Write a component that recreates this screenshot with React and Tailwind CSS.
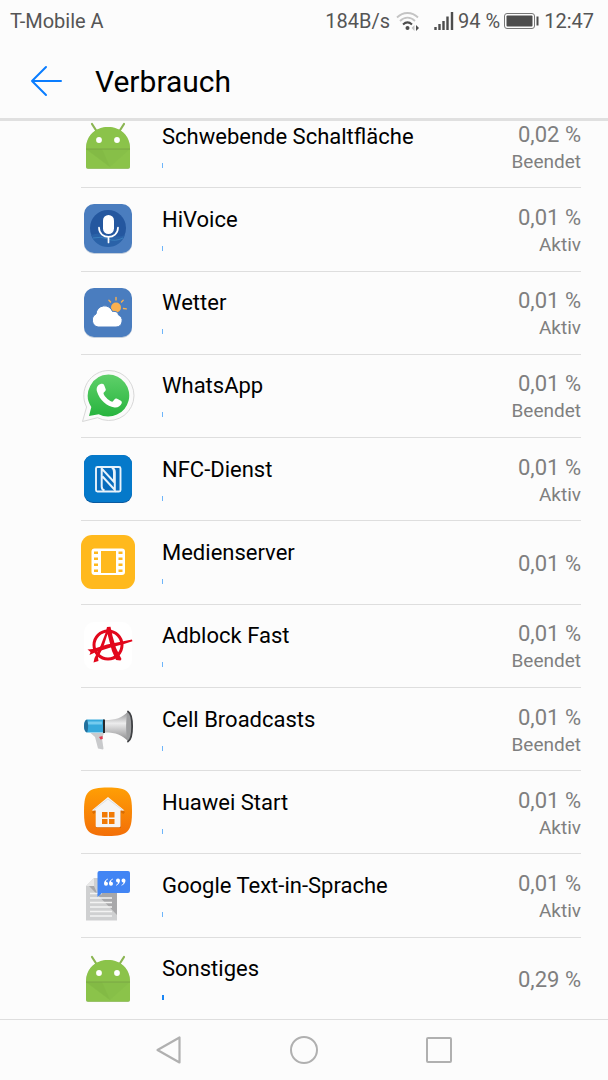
function AndroidIcon() {
  return (
    <>
      <path d="M11 5l4.500 7M43 5l-4.500 7" stroke="#8bb552" strokeWidth="2.200" strokeLinecap="round" />
      <path d="M5 30C5 16 15 8.500 27 8.500S49 16 49 30v18a2 2 0 0 1-2 2H7a2 2 0 0 1-2-2z" fill="#6d9c3a" opacity=".6" />
      <path d="M5 30C5 16 15 8 27 8s22 8 22 22v17.500a2 2 0 0 1-2 2H7a2 2 0 0 1-2-2z" fill="#8bc34a" />
      <path d="M5 30h44L29 48z" fill="#7cb342" opacity=".25" />
      <path d="M5 30h16L29 48z" fill="#7cb342" opacity=".4" />
      <path d="M5 30h44" stroke="#7aa644" strokeWidth="1" />
      <circle cx="18" cy="21" r="2.900" fill="#fff" />
      <circle cx="36" cy="21" r="2.900" fill="#fff" />
    </>
  );
}

function VoiceIcon() {
  return (
    <>
      <rect x="3" y="4" width="48" height="48" rx="10" fill="#9fb0c8" opacity=".6" />
      <rect x="3" y="2" width="48" height="49" rx="10" fill="#4a7dbf" />
      <circle cx="27" cy="26" r="18" fill="#24579f" />
      <path d="M10 33q8-3 17 0t17 0A18 18 0 0 1 10 33z" fill="#2a62a8" />
      <path d="M12 36q8-2 15 1t15-1" stroke="#3b80bd" strokeWidth="1" />
      <rect x="22" y="13" width="11" height="19" rx="5.500" fill="#fff" />
      <path d="M18 25.500c0 12.500 19 12.500 19 0M27.500 35v5.500" stroke="#fff" strokeWidth="1.700" strokeLinecap="round" />
    </>
  );
}

function WeatherIcon() {
  return (
    <>
      <rect x="3" y="4" width="48" height="48" rx="10" fill="#9fb0c8" opacity=".6" />
      <rect x="3" y="2" width="48" height="49" rx="10" fill="#4a7dbf" />
      <circle cx="35" cy="21.500" r="5" fill="#f9b04f" />
      <path
        d="M35 14v-2.500M29.500 16l-1.600-1.800M40.500 16l1.700-1.800M42.500 22.500l2.800.4"
        stroke="#f9b04f"
        strokeWidth="1.400"
        strokeLinecap="round"
      />
      <path
        d="M17 41a7 7 0 0 1-2-13 8.500 8.500 0 0 1 16.500-2.500c4-.5 5.500 1 6 3.500A6.300 6.300 0 0 1 35 41z"
        fill="#fff"
        stroke="#4a7dbf"
        strokeWidth="1"
      />
    </>
  );
}

function WhatsAppIcon() {
  return (
    <>
      <path
        d="M28 1.500a25 25 0 1 1-11.500 47.200L1.500 52.500 5.600 38A25 25 0 0 1 28 1.500z"
        fill="#fafafa"
        stroke="#d8d8d8"
        strokeWidth="1"
      />
      <path d="M27.500 5.500a21 21 0 1 1-9.800 39.700L8 47l2.300-9A21 21 0 0 1 27.500 5.500z" fill="url(#waGreen)" />
      <path
        d="M19.500 15c-3 1-4.500 4-3.500 7.500C18.500 31 26 37.500 33.500 38.500c3.500.4 6-1.500 7.200-4.200.6-1.700-.3-2.400-5.200-4.700-1.500-.7-2.200 1.600-3.800 3-1.200.8-8.500-4.600-9.200-8.200-.2-1 2.500-2.200 2.300-3.800-.2-1-1.500-4-2-5-.5-.9-1.800-1-3.300-.6z"
        fill="#fff"
      />
      <defs>
        <linearGradient id="waGreen" x1="0" y1="0" x2="0" y2="1">
          <stop offset="0" stopColor="#5fd06a" />
          <stop offset="1" stopColor="#27b43e" />
        </linearGradient>
      </defs>
    </>
  );
}

function NfcIcon() {
  return (
    <>
      <rect x="3" y="3" width="48" height="48" rx="9" fill="#0a5aa0" />
      <rect x="3" y="3" width="48" height="47" rx="9" fill="#0579ca" />
      <rect x="15" y="15" width="24.500" height="24.500" rx="1.500" fill="#0a6cbc" stroke="#e9f3fb" strokeWidth="1.900" />
      <path
        d="M23.500 38.500c-1.800-.6-2.800-2-2.800-4V16.500L33 30V20c0-2-.5-3.500-2-4.500M31 16c1.800.6 2.800 2 2.800 4v18L21.500 24.500"
        stroke="#e9f3fb"
        strokeWidth="2"
      />
    </>
  );
}

function MediaIcon() {
  return (
    <>
      <rect width="54" height="54" rx="11" fill="#ffb91d" />
      <rect x="10.500" y="13.500" width="33.500" height="26.500" rx="3" fill="#fff" />
      <path d="M20 16h15v22H20z" fill="#ffb91d" />
      <path
        d="M13 16.500h4V19h-4zM13 22.500h4V25h-4zM13 28.500h4V31h-4zM13 34.500h4V37h-4zM37.500 16.500h4V19h-4zM37.500 22.500h4V25h-4zM37.500 28.500h4V31h-4zM37.500 34.500h4V37h-4z"
        fill="#ffb91d"
      />
    </>
  );
}

function AdblockIcon() {
  return (
    <>
      <rect x="3" y="3" width="48" height="48" rx="10" fill="#fff" />
      <circle cx="27" cy="26" r="14" stroke="#e2071c" strokeWidth="3" />
      <path
        d="M26 8l3.500-.3 2 9.300 3.500 12 5.500 11-1 1.500-4.500-.5-4-9-4.500-17-4 12.500-5.500 11 .5 3.500-5 1.500 1-4.500 6-12 5-13z"
        fill="#e2071c"
      />
      <path d="M6.500 30.500l5.500-.5 14-4.500 25-5 .4 1.800L43 25l-15 4-14 4.500-5.500 2.500 1-3z" fill="#e2071c" />
    </>
  );
}

function MegaphoneIcon() {
  return (
    <>
      <path d="M9.500 31l4.500 4 3 11.500 5 1 .5-1-1.500-10 2-5.500z" fill="#c9cacc" />
      <path d="M18 35l3.500-1 .3 3-2.300.5z" fill="#e23b50" />
      <path d="M6 17.500h17v13H6c-4-1-4-12 0-13z" fill="#36a9dc" />
      <path d="M6 19.500h15v3H5z" fill="#74cbef" />
      <path d="M6 17.500c-4 1-4 12 0 13 1.500-3 1.500-10 0-13z" fill="#236f9b" />
      <path d="M22 17.500h2v13.500h-2z" fill="#26292d" />
      <path d="M24 18c11 0 17-2 23-8.500v29.500C41 33 35 30.500 24 30.500z" fill="url(#horn)" />
      <path d="M47 9.500c5.500 3 5.500 27 0 30-2.500-5-2.500-25 0-30z" fill="#9d9ea0" />
      <path d="M47 9.500c5.500 3 5.500 27 0 30" stroke="#3f4144" strokeWidth="1.800" strokeLinecap="round" />
      <defs>
        <linearGradient id="horn" x1="0" y1="0" x2="0" y2="1">
          <stop offset="0" stopColor="#8d8d8f" />
          <stop offset=".4" stopColor="#ececed" />
          <stop offset="1" stopColor="#8a8a8c" />
        </linearGradient>
      </defs>
    </>
  );
}

function HomeIcon() {
  return (
    <>
      <path
        d="M27 2.500c20 0 24 4 24 24s-4 24.500-24 24.500S3 46.500 3 26.500s4-24 24-24z"
        fill="url(#homeOrange)"
      />
      <path d="M27 13l17 14-1.500 2-2.500-1.500V43H15V27.500L12.500 29 11 27z" fill="#c55c00" opacity=".6" />
      <path d="M27 12l16.500 13.500h-4V41a1.300 1.300 0 0 1-1.300 1.300H16a1.300 1.300 0 0 1-1.300-1.300V25.500h-4z" fill="#f5f5f5" />
      <path d="M12 25.500L27 14l15 11.500" stroke="#d9d9d9" strokeWidth=".8" />
      <path d="M21 27h5.500v5.500H21zM28 27h5.500v5.500H28zM21 34h5.500v5H21zM28 34h5.500v5H28z" fill="#f17a05" />
      <defs>
        <linearGradient id="homeOrange" x1="0" y1="0" x2="0" y2="1">
          <stop offset="0" stopColor="#ff9f05" />
          <stop offset="1" stopColor="#f36f08" />
        </linearGradient>
      </defs>
    </>
  );
}

function SpeechIcon() {
  return (
    <>
      <path d="M5 17l8-8h23v42.500H5z" fill="#cfd0d1" />
      <path d="M5 17l8-8v8z" fill="#e8e8e8" />
      <path d="M5 17h3l28 29V24H16l-3-7z" fill="#9b9b9c" opacity=".75" />
      <path d="M9 24.500h12M9 29h22M9 33.500h22M9 38h22M9 42.500h22M9 47h22" stroke="#f3f3f3" strokeWidth="1.500" />
      <path d="M18.500 2H47a2 2 0 0 1 2 2v18a2 2 0 0 1-2 2H21l-4.500 4V4a2 2 0 0 1 2-2z" fill="#4285f4" />
      <path
        d="M27 9.500c-2.500 1-4 3-4 5.200a2 2 0 1 0 2-2c0-1 .8-1.900 2-2.400zM32 9.500c-2.500 1-4 3-4 5.200a2 2 0 1 0 2-2c0-1 .8-1.900 2-2.400zM35 16.800c2.500-1 4-3 4-5.200a2 2 0 1 0-2 2c0 1-.8 1.900-2 2.400zM40.500 16.800c2.500-1 4-3 4-5.200a2 2 0 1 0-2 2c0 1-.8 1.900-2 2.400z"
        fill="#fff"
      />
    </>
  );
}

const apps = [
  { name: "Schwebende Schaltfläche", value: "0,02 %", status: "Beendet", Icon: AndroidIcon },
  { name: "HiVoice", value: "0,01 %", status: "Aktiv", Icon: VoiceIcon },
  { name: "Wetter", value: "0,01 %", status: "Aktiv", Icon: WeatherIcon },
  { name: "WhatsApp", value: "0,01 %", status: "Beendet", Icon: WhatsAppIcon },
  { name: "NFC-Dienst", value: "0,01 %", status: "Aktiv", Icon: NfcIcon },
  { name: "Medienserver", value: "0,01 %", Icon: MediaIcon },
  { name: "Adblock Fast", value: "0,01 %", status: "Beendet", Icon: AdblockIcon },
  { name: "Cell Broadcasts", value: "0,01 %", status: "Beendet", Icon: MegaphoneIcon },
  { name: "Huawei Start", value: "0,01 %", status: "Aktiv", Icon: HomeIcon },
  { name: "Google Text-in-Sprache", value: "0,01 %", status: "Aktiv", Icon: SpeechIcon },
  { name: "Sonstiges", value: "0,29 %", Icon: AndroidIcon },
];

function StatusBar() {
  return (
    <div className="flex h-[42px] items-center justify-between pr-3.5 pl-2.5 text-xl text-[#555]">
      <span>T-Mobile A</span>
      <div className="flex items-center">
        <span>184B/s</span>
        <svg className="ml-1.5 h-5 w-6" viewBox="0 0 24 20" fill="none" aria-hidden="true">
          <path d="M1 6.500c6-6 15-6 21 0M4 10c4.500-4.500 10.500-4.500 15 0" stroke="#c4c4c4" strokeWidth="1.800" />
          <path d="M7 13.500c3-2.800 6-2.800 9 0" stroke="#4d4d4d" strokeWidth="2" />
          <circle cx="11.500" cy="17" r="2" fill="#4d4d4d" />
          <path d="M20 14v6l3-3z" fill="#4d4d4d" />
          <path d="M18.500 14v6l-3-3z" fill="#c4c4c4" />
        </svg>
        <svg className="ml-3.5 h-5 w-5" viewBox="0 0 20 20" fill="none" aria-hidden="true">
          <path d="M1.500 19v-3M5.500 19v-6M9.500 19v-9M13.500 19V5.500M18 19V1" stroke="#4d4d4d" strokeWidth="2.400" />
        </svg>
        <span className="ml-1">94 %</span>
        <svg className="ml-1 h-4 w-9" viewBox="0 0 36 16" fill="none" aria-hidden="true">
          <rect x=".5" y=".5" width="30" height="15" rx="2.500" stroke="#777" />
          <rect x="2.500" y="2.500" width="26" height="11" rx="1" fill="#4d4d4d" />
          <path d="M33.500 3.500v9" stroke="#4d4d4d" strokeWidth="2" />
        </svg>
        <span className="ml-1">12:47</span>
      </div>
    </div>
  );
}

function AppRow({ app, last }) {
  const { name, value, status, Icon } = app;
  return (
    <li
      className={`ml-[81px] mr-[27px] flex items-center border-b ${last ? "border-transparent" : "border-[#dedede]"}`}
    >
      <svg className="size-[54px] shrink-0" viewBox="0 0 54 54" fill="none" aria-hidden="true">
        <Icon />
      </svg>
      <div className="ml-[27px] flex-1 pb-0.5">
        <p className="text-[22px] leading-7 text-black">{name}</p>
        <div className={`mt-3 h-[5px] ${last ? "w-[2px] bg-[#1a86f5]" : "w-px bg-[#6db5fa]"}`} />
      </div>
      <div className="pt-[3px] text-right text-[#7f7f7f]">
        <p className="text-[22px] leading-7">{value}</p>
        {status && <p className="text-[19px] leading-[26px]">{status}</p>}
      </div>
    </li>
  );
}

export default function App() {
  return (
    <div className="flex min-h-screen flex-col bg-[#fcfcfc] font-['Roboto',sans-serif]">
      <StatusBar />
      <header className="flex h-[79px] items-center border-b-[3px] border-[#e0e0e0] pt-0.5 pl-[30px]">
        <button type="button" aria-label="Zurück">
          <svg className="h-8 w-8" viewBox="0 0 32 32" fill="none" aria-hidden="true">
            <path d="M31 16H2M16 2L2 16l14 14" stroke="#0a7dff" strokeWidth="2" strokeLinecap="round" strokeLinejoin="round" />
          </svg>
        </button>
        <h1 className="ml-[33px] pt-0.5 text-3xl text-black">Verbrauch</h1>
      </header>
      <main className="flex flex-1 flex-col overflow-hidden">
        {/* list is scrolled, so the first row slides under the header */}
        <ul className="-mt-4 -mb-0.5 grid flex-1 auto-rows-fr">
          {apps.map((app, i) => (
            <AppRow key={app.name} app={app} last={i === apps.length - 1} />
          ))}
        </ul>
      </main>
      <nav className="flex h-[61px] items-center justify-center border-t border-[#dedede]">
        <button type="button" aria-label="Zurück" className="flex w-[135px] justify-center">
          <svg className="size-7" viewBox="0 0 28 28" fill="none" aria-hidden="true">
            <path d="M24.500 1.500v25L2.500 14z" stroke="#b0b0b0" strokeWidth="2.200" strokeLinejoin="round" />
          </svg>
        </button>
        <button type="button" aria-label="Startbildschirm" className="flex w-[135px] justify-center">
          <svg className="size-7" viewBox="0 0 28 28" fill="none" aria-hidden="true">
            <circle cx="14" cy="14" r="13" stroke="#b0b0b0" strokeWidth="2" />
          </svg>
        </button>
        <button type="button" aria-label="Letzte Apps" className="flex w-[135px] justify-center">
          <svg className="size-7" viewBox="0 0 28 28" fill="none" aria-hidden="true">
            <rect x="2" y="2" width="24" height="24" rx="1" stroke="#b0b0b0" strokeWidth="2" />
          </svg>
        </button>
      </nav>
    </div>
  );
}
